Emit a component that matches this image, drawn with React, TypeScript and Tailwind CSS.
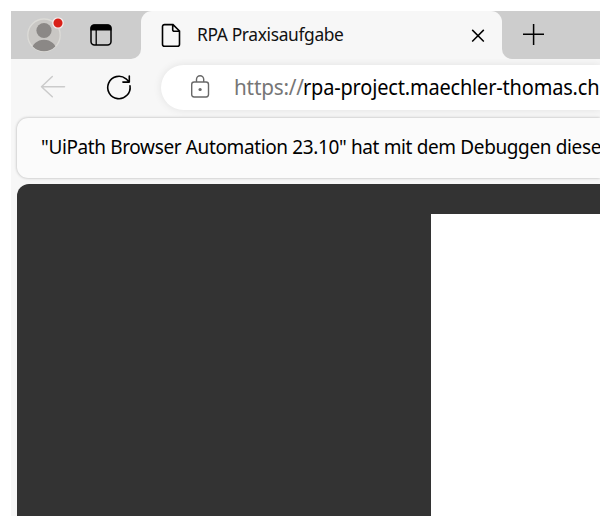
function TabStrip() {
  return (
    <div className="flex h-12 bg-[#f7f7f7]">
      <div className="flex w-[130px] shrink-0 rounded-br-[10px] bg-[#cdcdcd]">
        <svg className="h-12 w-[130px]" viewBox="0 0 130 48" fill="none">
          <defs>
            <clipPath id="avatar">
              <circle cx="33" cy="24.2" r="16" />
            </clipPath>
          </defs>
          <circle cx="33" cy="24.2" r="16.2" fill="#c9c7c4" stroke="#dcdbd7" strokeWidth="1.3" />
          <g clipPath="url(#avatar)" fill="#8b8886">
            <circle cx="33" cy="19.5" r="7.6" />
            <ellipse cx="33" cy="40.2" rx="12.5" ry="11.5" />
          </g>
          <circle cx="47" cy="12" r="5.2" fill="#d92018" stroke="#f3eeee" strokeWidth="1.3" />
          <rect x="80" y="14.1" width="20" height="20" rx="3.5" stroke="#000" strokeWidth="1.5" />
          <path d="M79.5 19.5V17a3.5 3.5 0 0 1 3.5-3.5h14a3.5 3.5 0 0 1 3.5 3.5v2.5z" fill="#000" />
          <path d="M85.2 19v15" stroke="#000" strokeWidth="1.3" />
        </svg>
      </div>
      <div className="w-[361px] shrink-0 bg-[#cdcdcd]">
        <div className="flex h-full rounded-t-[11px] bg-[#f7f7f7]">
          <svg className="ml-5 mt-3 h-6 w-5 shrink-0" viewBox="0 0 20 24" fill="none" stroke="#000" strokeWidth="1.6">
            <path d="M3.5 1.6H12L18.5 8v13.2a2 2 0 0 1-2 2H3.5a2 2 0 0 1-2-2V3.6a2 2 0 0 1 2-2ZM11.7 1.8v5a1.5 1.5 0 0 0 1.5 1.5h5" />
          </svg>
          <span className="ml-4 mt-[11px] w-[274px] shrink-0 whitespace-nowrap text-[18px] leading-6 text-[#111]">
            <span className="inline-block origin-left scale-x-[0.966] tracking-[-0.37px]">RPA Praxisaufgabe</span>
          </span>
          <svg className="mt-[17px] h-[14px] w-[14px] shrink-0" viewBox="0 0 14 14" fill="none" stroke="#000" strokeWidth="1.5">
            <path d="m1.2 1.9 11.6 11.6M12.8 1.9 1.2 13.5" />
          </svg>
        </div>
      </div>
      <div className="flex flex-1 rounded-bl-[10px] bg-[#cdcdcd]">
        <svg className="ml-5 mt-3 h-[22px] w-[23px]" viewBox="0 0 23 22" fill="none" stroke="#000" strokeWidth="1.5">
          <path d="M1 11.3h21M11.6 1v21" />
        </svg>
      </div>
    </div>
  );
}

function Toolbar() {
  return (
    <div className="flex h-[58px] overflow-hidden bg-[#f7f7f7]">
      <svg className="h-[58px] w-[150px] shrink-0" viewBox="0 0 150 58" fill="none" strokeWidth="1.5" strokeLinecap="round" strokeLinejoin="round">
        <path d="M53.5 27.7H30.5M41.3 17.5 30.5 27.7l10.8 10" stroke="#cbcbcb" />
        <path d="M119 26.8a11.2 11.2 0 1 1-4-7l3.3 3.2M118.3 17v6.1h-6.4" stroke="#000" strokeWidth="1.6" />
      </svg>
      <div className="mt-1.5 flex h-[45px] flex-1 rounded-l-full bg-white pt-2 shadow-[0_0_9px_rgba(0,0,0,0.09)]">
        <svg className="ml-[29px] mt-0.5 h-6 w-5 shrink-0" viewBox="0 0 20 24" fill="none" stroke="#686868" strokeWidth="1.4">
          <rect x="1.7" y="7" width="16.8" height="15" rx="2.4" />
          <path d="M6.5 6.9V4.3a3.6 3.6 0 0 1 7.2 0v2.6" />
          <circle cx="10.1" cy="14.5" r="1.6" fill="#686868" stroke="none" />
        </svg>
        <span className="ml-6 flex whitespace-nowrap text-[21px] leading-7 tracking-[-0.18px] text-black">
          <span className="w-[68.5px] shrink-0 origin-left scale-x-[0.985] text-[#767676]">https://</span>
          <span className="w-[298px] shrink-0 origin-left scale-x-[0.951]">rpa-project.maechler-thomas.ch</span>
        </span>
      </div>
    </div>
  );
}

export default function App() {
  return (
    <div className="h-[516px] w-[600px] overflow-hidden bg-white pl-[11px] pt-[11px] font-['Noto_Sans',sans-serif]">
      <TabStrip />
      <Toolbar />
      <div className="h-[399px] bg-[#f7f7f7] pl-1.5 pt-px">
        <div className="flex h-[60px] rounded-l-[11px] bg-[#fbfbfb] pl-6 pt-[15px] shadow-[0_0_3px_rgba(0,0,0,0.3)]">
          <span className="h-7 shrink-0 origin-left scale-x-[0.949] whitespace-nowrap text-[20px] leading-7 tracking-[-0.38px] text-black">
            "UiPath Browser Automation 23.10" hat mit dem Debuggen diese
          </span>
        </div>
        <div className="mt-1.5 h-[332px] rounded-tl-[12px] bg-[#333] pl-[414px] pt-[30px]">
          <div className="h-[302px] bg-white" />
        </div>
      </div>
    </div>
  );
}
